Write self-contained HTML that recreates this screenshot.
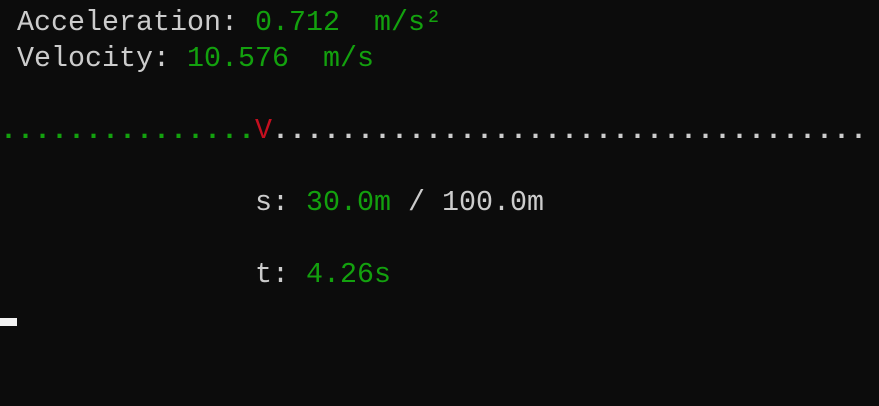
<!DOCTYPE html>
<html><head><style>
html,body{margin:0;padding:0;background:#0c0c0c;width:879px;height:406px;overflow:hidden}
pre{margin:0;position:absolute;left:0;top:5px;font-family:"Liberation Mono",monospace;font-size:28.33px;line-height:36px;color:#cccccc;white-space:pre}
.g{color:#13a10e}.r{color:#c50f1f}.d{font-weight:bold}
.cur{position:absolute;left:0;top:318px;width:17px;height:8px;background:#f2f2f2}
</style></head><body>
<pre> Acceleration: <span class="g">0.712  m/s²</span>
 Velocity: <span class="g">10.576  m/s</span>

<span class="g d">...............</span><span class="r">V</span><span class="d">...................................</span>

               s: <span class="g">30.0m</span> / 100.0m

               t: <span class="g">4.26s</span>
</pre>
<div class="cur"></div>
</body></html>
